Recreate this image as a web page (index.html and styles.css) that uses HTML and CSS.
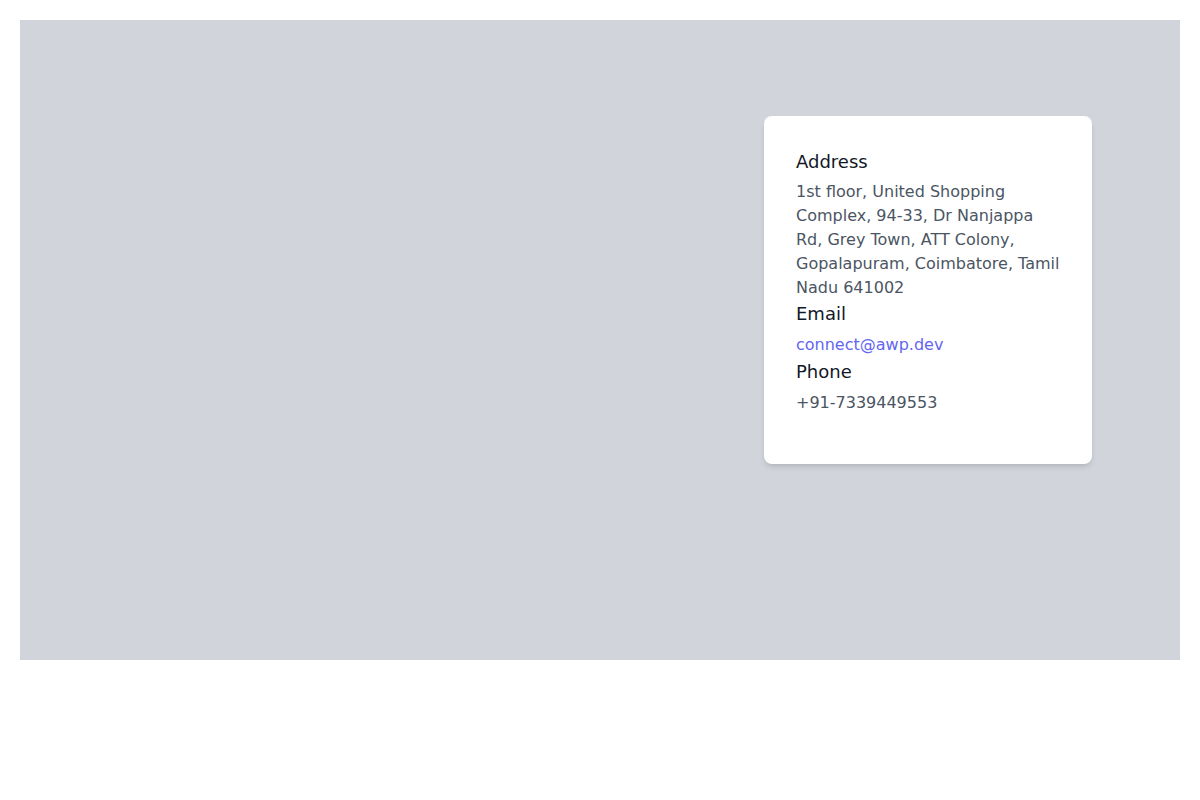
FILE: index.html
```html
<!DOCTYPE html>
<html lang="en">
<head>
    <meta charset="UTF-8">
    <meta name="viewport" content="width=device-width, initial-scale=1.0">
    <title>Contact</title>
    <link rel="stylesheet" href="styles.css">
</head>
<body>
    <section class="contact">
        <div class="map-area">
            <div class="contact-card">
                <h2 class="card-title">Address</h2>
                <p class="card-text">1st floor, United Shopping Complex, 94-33, Dr Nanjappa Rd, Grey Town, ATT Colony, Gopalapuram, Coimbatore, Tamil Nadu 641002</p>
                <h2 class="card-title">Email</h2>
                <a class="card-link" href="#">connect@awp.dev</a>
                <h2 class="card-title">Phone</h2>
                <p class="card-text phone">+91-7339449553</p>
            </div>
        </div>
    </section>
</body>
</html>
```

FILE: styles.css
```css
body {
    margin: 0;
    padding: 0;
    font-family: 'DejaVu Sans', sans-serif;
    background-color: #fff;
}
.contact {
    padding: 20px;
}
.map-area {
    background-color: #d1d5db;
    height: 640px;
    box-sizing: border-box;
    padding: 96px 88px;
    display: flex;
    justify-content: flex-end;
    align-items: flex-start;
}
.contact-card {
    width: 328px;
    box-sizing: border-box;
    background-color: #fff;
    border-radius: 8px;
    box-shadow: 0 4px 6px -1px rgba(0,0,0,0.1), 0 2px 4px -2px rgba(0,0,0,0.1);
    padding: 32px 32px 49px;
    display: flex;
    flex-direction: column;
}
.card-title {
    margin: 0;
    font-size: 18px;
    line-height: 28px;
    font-weight: normal;
    color: #111827;
}
.card-text {
    margin: 4px 0 0;
    font-size: 16px;
    line-height: 24px;
    color: #4b5563;
}
.card-text.phone {
    margin-top: 5px;
}
.card-link {
    margin-top: 4px;
    font-size: 16px;
    line-height: 26px;
    color: #6366f1;
    text-decoration: none;
}
```
